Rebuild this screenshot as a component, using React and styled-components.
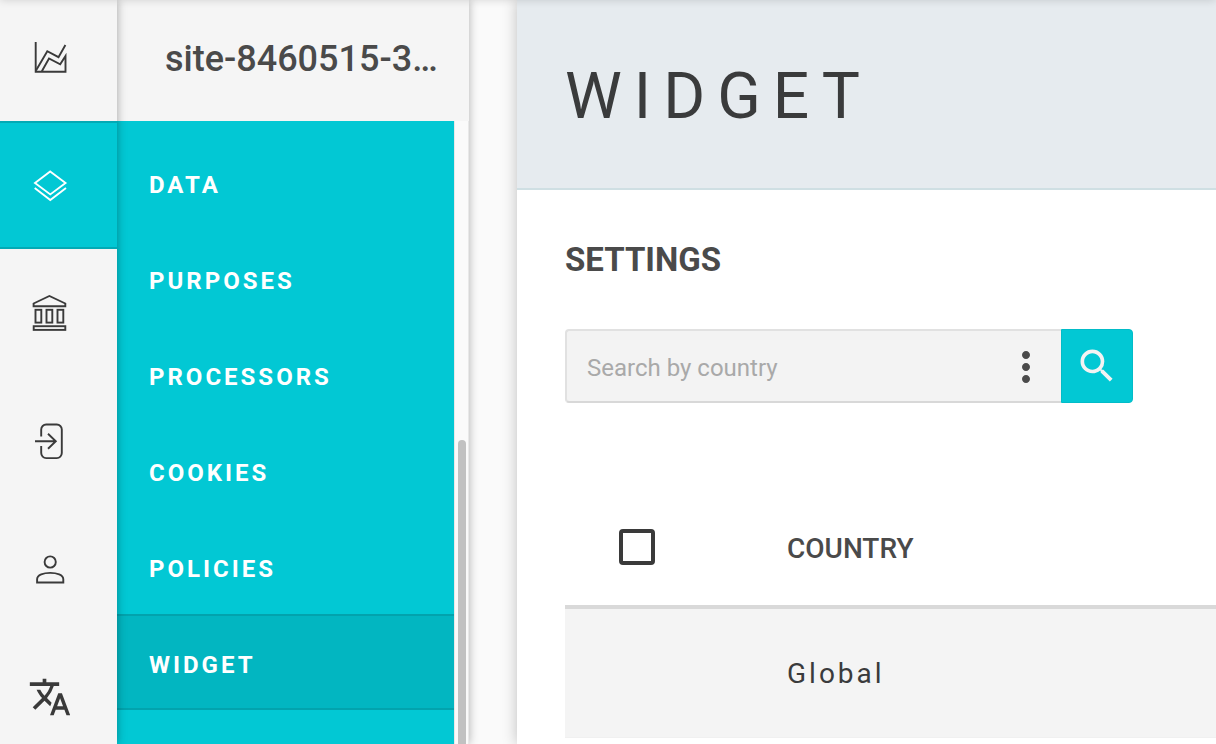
import styled, { createGlobalStyle } from "styled-components";
import { MdMoreVert, MdSearch, MdTranslate } from "react-icons/md";

const GlobalStyle = createGlobalStyle`
  * {
    box-sizing: border-box;
  }
  body {
    margin: 0;
    background: #fafafa;
    color: #3a3b3c;
    font-family: Roboto, "Liberation Sans", sans-serif;
  }
`;

const menuItems = ["Data", "Purposes", "Processors", "Cookies", "Policies", "Widget"];

const railItems = [
  { label: "Reports", icon: <ChartIcon /> },
  { label: "Sites", icon: <LayersIcon />, active: true },
  { label: "Company", icon: <BankIcon /> },
  { label: "Log in", icon: <LoginIcon /> },
  { label: "Account", icon: <PersonIcon /> },
  { label: "Languages", icon: <MdTranslate size={44} /> },
];

export default function App() {
  return (
    <>
      <GlobalStyle />
      <TopShadow />
      <Shell>
        <Rail>
          {railItems.map((item) => (
            <RailLink key={item.label} href="#" aria-label={item.label} $active={item.active}>
              {item.icon}
            </RailLink>
          ))}
        </Rail>
        <Sidebar>
          <SiteName>site-8460515-3…</SiteName>
          <MenuArea>
            <Menu>
              {menuItems.map((name) => (
                <MenuLink key={name} href="#" $active={name === "Widget"}>
                  {name}
                </MenuLink>
              ))}
            </Menu>
            <Track>
              <Thumb />
            </Track>
          </MenuArea>
        </Sidebar>
        <Main>
          <PageHeader>
            <h1>WIDGET</h1>
          </PageHeader>
          <Content>
            <SectionTitle>SETTINGS</SectionTitle>
            <SearchForm onSubmit={(e) => e.preventDefault()}>
              <SearchField>
                <input type="text" aria-label="Search by country" placeholder="Search by country" />
                <MoreButton type="button" aria-label="More options">
                  <MdMoreVert size={48} />
                </MoreButton>
              </SearchField>
              <SearchButton type="submit" aria-label="Search">
                <MdSearch size={44} />
              </SearchButton>
            </SearchForm>
            <Table>
              <thead>
                <tr>
                  <CheckCell>
                    <Checkbox type="checkbox" aria-label="Select all countries" />
                  </CheckCell>
                  <HeadCell>COUNTRY</HeadCell>
                </tr>
              </thead>
              <tbody>
                <tr>
                  <Cell />
                  <Cell>Global</Cell>
                </tr>
              </tbody>
            </Table>
          </Content>
        </Main>
      </Shell>
    </>
  );
}

function ChartIcon() {
  return (
    <LineIcon viewBox="0 0 48 48">
      <path d="M9.7 9v29.7h29.8V23l-5.3 8.3L23 25.5l-7.3 13" />
      <path d="M10 37.5l11.3-19.3 11.2 6L39.4 12" />
    </LineIcon>
  );
}

function LayersIcon() {
  return (
    <LineIcon viewBox="0 0 48 48">
      <path d="M24.2 10.4L39.5 22 24.3 33.4 9 22z" />
      <path d="M8.7 27l15.6 12L40 27" />
    </LineIcon>
  );
}

function BankIcon() {
  return (
    <LineIcon viewBox="0 0 48 48">
      <path d="M7.6 14.5L23.4 7l15.9 7.5v2.8H7.6z" />
      <rect x="9.5" y="20.8" width="5.8" height="12.8" />
      <rect x="20.5" y="20.8" width="5.8" height="12.8" />
      <rect x="31.5" y="20.8" width="5.8" height="12.8" />
      <rect x="7.7" y="37.2" width="31.6" height="3.7" />
    </LineIcon>
  );
}

function LoginIcon() {
  return (
    <LineIcon viewBox="0 0 48 48">
      <path d="M15.2 19.5v-7a5 5 0 0 1 5-5h10.6a5 5 0 0 1 5 5v23.6a5 5 0 0 1-5 5H20.2a5 5 0 0 1-5-5V29" />
      <path d="M9 24.3h21M22 16.8l7.8 7.5-7.8 7.5" />
    </LineIcon>
  );
}

function PersonIcon() {
  return (
    <LineIcon viewBox="0 0 48 48">
      <circle cx="24.2" cy="17" r="5.6" />
      <path d="M11.1 37.5v-3.3c0-4.4 6.6-6.3 13.1-6.3s13.1 1.9 13.1 6.3v3.3z" />
    </LineIcon>
  );
}

const LineIcon = styled.svg`
  width: 48px;
  height: 48px;
  fill: none;
  stroke: currentColor;
  stroke-width: 1.9;
`;

const TopShadow = styled.div`
  position: fixed;
  top: -8px;
  left: 0;
  right: 0;
  height: 8px;
  z-index: 3;
  box-shadow: 0 0 8px rgba(0, 0, 0, 0.16);
`;

const Shell = styled.div`
  display: flex;
  height: 100vh;
  overflow: hidden;
`;

const Rail = styled.nav`
  display: flex;
  flex-direction: column;
  flex: none;
  width: 117px;
  z-index: 2;
  background: #f5f5f5;
  box-shadow: 0 0 9px rgba(0, 0, 0, 0.34);
`;

const RailLink = styled.a`
  display: flex;
  flex: none;
  align-items: center;
  justify-content: center;
  height: 128px;
  padding-right: 17px;
  color: ${(props) => (props.$active ? "#fff" : "#3a3a3a")};
  background: ${(props) => (props.$active ? "#02c8d4" : "transparent")};
  border: solid ${(props) => (props.$active ? "#02aab5" : "transparent")};
  border-width: 2px 0;

  &:first-child {
    height: 121px;
    padding-bottom: 7px;
  }
`;

const Sidebar = styled.aside`
  display: flex;
  flex-direction: column;
  flex: none;
  width: 352px;
  z-index: 1;
  background: #f5f5f5;
  box-shadow: 0 0 9px rgba(0, 0, 0, 0.3);
`;

const SiteName = styled.div`
  flex: none;
  height: 121px;
  padding: 0 24px 0 48px;
  overflow: hidden;
  white-space: nowrap;
  color: #4a4a4a;
  font-size: 36px;
  font-weight: 500;
  line-height: 118px;
`;

const MenuArea = styled.div`
  display: flex;
  flex: 1;
  min-height: 0;
`;

const Menu = styled.nav`
  flex: 1;
  padding-top: 13px;
  background: #02c8d4;
`;

const MenuLink = styled.a`
  display: flex;
  align-items: center;
  height: 96px;
  padding: 6px 32px 0;
  color: #fff;
  background: ${(props) => (props.$active ? "#02b6c1" : "transparent")};
  border: solid ${(props) => (props.$active ? "#02a3ad" : "transparent")};
  border-width: 2px 0;
  font-size: 24px;
  font-weight: 700;
  letter-spacing: 3px;
  text-decoration: none;
  text-transform: uppercase;
`;

const Track = styled.div`
  display: flex;
  justify-content: center;
  width: 15px;
  padding-top: 319px;
  background: #fafafa;
  border: solid #e8e8e8;
  border-width: 0 1px;
`;

const Thumb = styled.div`
  width: 8px;
  background: #c1c1c1;
  border-radius: 4px 4px 0 0;
`;

const Main = styled.main`
  flex: 1;
  min-width: 0;
  margin-left: 48px;
  background: #fff;
  box-shadow: 0 0 14px rgba(0, 0, 0, 0.24);
`;

const PageHeader = styled.header`
  height: 190px;
  padding: 0 48px;
  background: #e6ebef;
  border-bottom: 2px solid #cfdfe3;

  h1 {
    margin: 0;
    font-size: 64px;
    font-weight: 400;
    letter-spacing: 12px;
    line-height: 194px;
  }
`;

const Content = styled.div`
  padding: 50px 0 0 48px;
`;

const SectionTitle = styled.h2`
  margin: 0;
  color: #4a4a4a;
  font-size: 33px;
  font-weight: 700;
  line-height: 40px;
`;

const SearchForm = styled.form`
  display: flex;
  max-width: 568px;
  height: 74px;
  margin-top: 49px;
`;

const SearchField = styled.div`
  display: flex;
  flex: 1;
  align-items: center;
  padding: 0 11px 0 20px;
  background: #f3f3f3;
  border: 2px solid #e1e1e1;
  border-right: 0;
  border-bottom-color: #d8d8d8;
  border-radius: 4px 0 0 4px;

  input {
    flex: 1;
    min-width: 0;
    height: 100%;
    padding: 4px 0 0;
    background: none;
    border: 0;
    color: #3a3b3c;
    font: inherit;
    font-size: 24px;

    &::placeholder {
      color: #a9a9a9;
    }
  }
`;

const MoreButton = styled.button`
  display: flex;
  padding: 2px 0 0;
  background: none;
  border: 0;
  color: #4a4a4a;
`;

const SearchButton = styled.button`
  display: flex;
  align-items: center;
  justify-content: center;
  width: 72px;
  padding: 0;
  color: #f3f3f3;
  background: #02c8d4;
  border: 1px solid #02bcc8;
  border-radius: 0 4px 4px 0;
`;

const Table = styled.table`
  width: 100%;
  margin-top: 86px;
  border-collapse: separate;
  border-spacing: 0;
  table-layout: fixed;
`;

const CheckCell = styled.th`
  width: 222px;
  height: 120px;
  padding: 0 0 0 54px;
  border-bottom: 4px solid #d9d9d9;
  text-align: left;
  vertical-align: middle;
`;

const HeadCell = styled.th`
  padding: 2px 0 0;
  border-bottom: 4px solid #d9d9d9;
  color: #4a4a4a;
  font-size: 28px;
  font-weight: 500;
  text-align: left;
`;

const Cell = styled.td`
  height: 129px;
  padding: 0;
  background: #f4f4f4;
  border-bottom: 1px solid #f0f0f0;
  font-size: 28px;
  letter-spacing: 3px;
`;

const Checkbox = styled.input`
  display: block;
  width: 36px;
  height: 36px;
  margin: 0;
  appearance: none;
  background: #fff;
  border: 4px solid #3a3a3a;
  border-radius: 4px;
`;
